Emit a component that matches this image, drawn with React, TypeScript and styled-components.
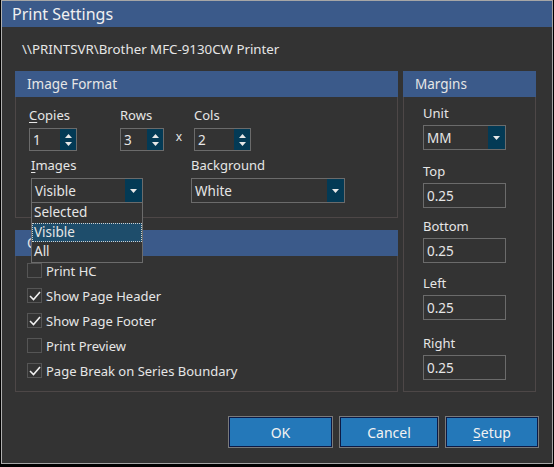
import styled, { createGlobalStyle } from "styled-components";

const GlobalStyle = createGlobalStyle`
  body {
    margin: 0;
    background: #000;
    font-family: "Noto Sans", "Open Sans", sans-serif;
    color: #e6e6e6;
  }
`;

const Window = styled.div`
  width: 550px;
  height: 462px;
  margin-left: 1px;
  border: 1px solid #a6a6a6;
  border-left-color: #b0b0b0;
  background: #333333;
  display: flex;
  flex-direction: column;
  font-size: 13px;
`;

const TitleBar = styled.div`
  height: 26px;
  background: #3b5a8a;
  display: flex;
  align-items: center;
  padding-left: 10px;
  font-size: 16px;
  color: #f0f0f0;
`;

const PrinterName = styled.div`
  height: 44px;
  display: flex;
  align-items: center;
  padding-left: 20px;
  font-size: 13.3px;
`;

const Main = styled.div`
  display: flex;
  gap: 5px;
  padding-left: 13px;
`;

const LeftCol = styled.div`
  width: 383px;
  display: flex;
  flex-direction: column;
  gap: 12px;
`;

const Group = styled.div<{ $h: number; $w?: number; $z?: number }>`
  height: ${(p) => p.$h}px;
  width: ${(p) => (p.$w ? `${p.$w}px` : "auto")};
  z-index: ${(p) => p.$z ?? 0};
  border: 1px solid #4d4747;
  border-top: none;
  display: flex;
  flex-direction: column;
  position: relative;
  box-sizing: border-box;
`;

const GroupHeader = styled.div`
  height: 26px;
  margin: 0 -1px;
  background: #3b5a8a;
  display: flex;
  align-items: center;
  padding-left: 12px;
  font-size: 13.5px;
`;

const FormatBody = styled.div`
  padding: 9px 0 0 13px;
  display: flex;
  flex-direction: column;
  gap: 5px;
`;

const Row = styled.div`
  display: flex;
  align-items: flex-end;
`;

const Field = styled.div<{ $w: number; $ml?: number }>`
  width: ${(p) => p.$w}px;
  margin-left: ${(p) => p.$ml ?? 0}px;
  display: flex;
  flex-direction: column;
  gap: 4px;
  position: relative;
`;

const Label = styled.div`
  height: 18px;
  line-height: 18px;
  font-size: 13px;
  u {
    text-decoration: underline;
    text-underline-offset: 2px;
  }
`;

const Box = styled.div<{ $h: number }>`
  height: ${(p) => p.$h}px;
  border: 1px solid #6b6b6b;
  box-sizing: border-box;
  display: flex;
  align-items: stretch;
`;

const BoxText = styled.div`
  flex: 1;
  display: flex;
  align-items: center;
  padding-left: 3px;
  font-size: 13.5px;
`;

const DarkButton = styled.div<{ $w: number }>`
  width: ${(p) => p.$w}px;
  background: #033a55;
  display: flex;
  flex-direction: column;
  align-items: center;
  justify-content: center;
  gap: 4px;
`;

const Times = styled.div`
  width: 30px;
  height: 22px;
  display: flex;
  align-items: center;
  justify-content: center;
  font-size: 12px;
  padding-bottom: 8px;
  box-sizing: border-box;
`;

const DropList = styled.div`
  position: absolute;
  top: 100%;
  left: 0;
  width: 112px;
  border: 1px solid #6b6b6b;
  border-top: none;
  box-sizing: border-box;
  background: #333;
  z-index: 5;
  font-size: 13.5px;
`;

const DropItem = styled.div<{ $active?: boolean }>`
  height: 19.5px;
  line-height: 19px;
  padding-left: 2px;
  box-sizing: border-box;
  background: ${(p) => (p.$active ? "#1e4d6b" : "transparent")};
  outline: ${(p) => (p.$active ? "1px dotted #cfcfcf" : "none")};
  outline-offset: -1px;
`;

const OptionList = styled.div`
  padding: 2px 0 0 11px;
  display: flex;
  flex-direction: column;
`;

const Check = styled.div`
  height: 25px;
  display: flex;
  align-items: center;
  gap: 4px;
  font-size: 13px;
`;

const CheckBox = styled.div`
  width: 15px;
  height: 15px;
  border: 1px solid #555;
  box-sizing: border-box;
  display: flex;
  align-items: center;
  justify-content: center;
`;

const MarginBody = styled.div`
  padding: 7px 0 0 19px;
  display: flex;
  flex-direction: column;
`;

const MarginField = styled.div<{ $mt: number }>`
  width: 83px;
  margin-top: ${(p) => p.$mt}px;
  display: flex;
  flex-direction: column;
  gap: 3px;
`;

const Footer = styled.div`
  display: flex;
  justify-content: flex-end;
  gap: 6px;
  padding: 24px 13px 0 0;
`;

const Button = styled.button<{ $w: number }>`
  width: ${(p) => p.$w}px;
  height: 32px;
  background: #2478b9;
  border: 1px solid #7a7a7a;
  box-shadow: inset 0 0 0 1px #0c1a45;
  color: #f2f2f2;
  font-family: "Noto Sans", "Open Sans", sans-serif;
  font-size: 14px;
  padding: 0;
  u {
    text-underline-offset: 2px;
  }
`;

const Up = () => (
  <svg width="7" height="4" viewBox="0 0 7 4">
    <path d="M0 4 L3.5 0 L7 4 Z" fill="#e8e8e8" />
  </svg>
);

const Down = () => (
  <svg width="7" height="4" viewBox="0 0 7 4">
    <path d="M0 0 L7 0 L3.5 4 Z" fill="#e8e8e8" />
  </svg>
);

const Tick = () => (
  <svg width="12" height="10" viewBox="0 0 12 10">
    <path d="M1 5 L4.5 8.5 L11 1" stroke="#f0f0f0" strokeWidth="1.6" fill="none" />
  </svg>
);

function Spinner({ value }: { value: string }) {
  return (
    <Box $h={23}>
      <BoxText>{value}</BoxText>
      <DarkButton $w={16}>
        <Up />
        <Down />
      </DarkButton>
    </Box>
  );
}

function Combo({ value }: { value: string }) {
  return (
    <Box $h={25}>
      <BoxText>{value}</BoxText>
      <DarkButton $w={17}>
        <Down />
      </DarkButton>
    </Box>
  );
}

const options = [
  { label: "Print HC", checked: false },
  { label: "Show Page Header", checked: true },
  { label: "Show Page Footer", checked: true },
  { label: "Print Preview", checked: false },
  { label: "Page Break on Series Boundary", checked: true },
];

const margins = [
  { label: "Top", mt: 12 },
  { label: "Bottom", mt: 9 },
  { label: "Left", mt: 11 },
  { label: "Right", mt: 14 },
];

export default function App() {
  return (
    <>
      <GlobalStyle />
      <Window>
        <TitleBar>Print Settings</TitleBar>
        <PrinterName>\\PRINTSVR\Brother MFC-9130CW Printer</PrinterName>
        <Main>
          <LeftCol>
            <Group $h={147} $z={2}>
              <GroupHeader>Image Format</GroupHeader>
              <FormatBody>
                <Row>
                  <Field $w={48}>
                    <Label>
                      <u>C</u>opies
                    </Label>
                    <Spinner value="1" />
                  </Field>
                  <Field $w={44} $ml={43}>
                    <Label>Rows</Label>
                    <Spinner value="3" />
                  </Field>
                  <Times>x</Times>
                  <Field $w={57}>
                    <Label>Cols</Label>
                    <Spinner value="2" />
                  </Field>
                </Row>
                <Row>
                  <Field $w={112} $ml={2}>
                    <Label>
                      <u>I</u>mages
                    </Label>
                    <Combo value="Visible" />
                    <DropList>
                      <DropItem>Selected</DropItem>
                      <DropItem $active>Visible</DropItem>
                      <DropItem>All</DropItem>
                    </DropList>
                  </Field>
                  <Field $w={154} $ml={48}>
                    <Label>Background</Label>
                    <Combo value="White" />
                  </Field>
                </Row>
              </FormatBody>
            </Group>
            <Group $h={162}>
              <GroupHeader>Options</GroupHeader>
              <OptionList>
                {options.map((o) => (
                  <Check key={o.label}>
                    <CheckBox>{o.checked && <Tick />}</CheckBox>
                    {o.label}
                  </Check>
                ))}
              </OptionList>
            </Group>
          </LeftCol>
          <Group $h={321} $w={133}>
            <GroupHeader>Margins</GroupHeader>
            <MarginBody>
              <MarginField $mt={0}>
                <Label>Unit</Label>
                <Combo value="MM" />
              </MarginField>
              {margins.map((m) => (
                <MarginField key={m.label} $mt={m.mt}>
                  <Label>{m.label}</Label>
                  <Box $h={25}>
                    <BoxText>0.25</BoxText>
                  </Box>
                </MarginField>
              ))}
            </MarginBody>
          </Group>
        </Main>
        <Footer>
          <Button $w={105}>OK</Button>
          <Button $w={100}>Cancel</Button>
          <Button $w={94}>
            <u>S</u>etup
          </Button>
        </Footer>
      </Window>
    </>
  );
}
